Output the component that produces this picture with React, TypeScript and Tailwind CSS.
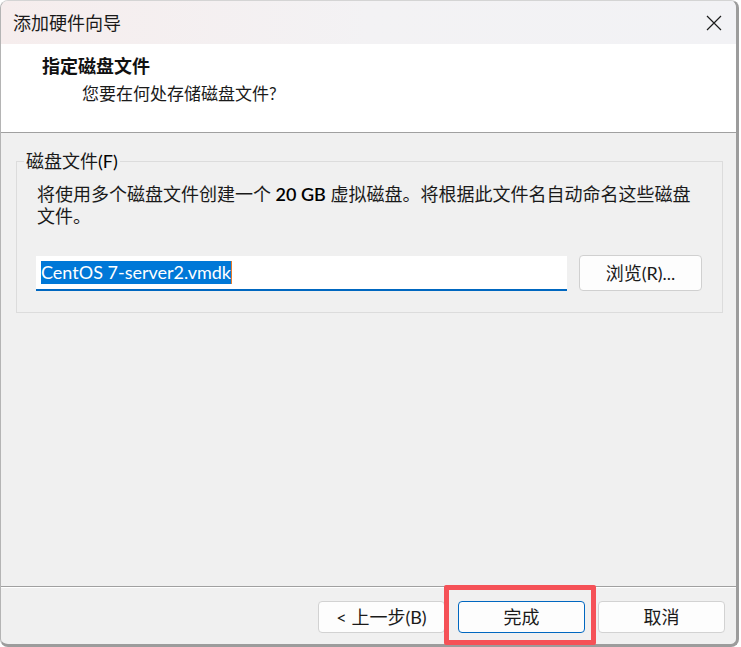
import React from 'react';

const FONT = "font-['Lato','Noto_Sans_CJK_SC',sans-serif]";

function CloseIcon() {
  return (
    <svg width="16" height="16" viewBox="0 0 16 16" fill="none">
      <path d="M1 1L15 15M15 1L1 15" stroke="#1c1c1c" strokeWidth="1.2" />
    </svg>
  );
}

function DialogButton({ label, primary }: { label: string; primary?: boolean }) {
  return (
    <button
      className={`w-[127px] h-[32px] rounded-[4px] bg-[#fdfdfd] text-[18px] text-[#1a1a1a] border ${
        primary ? 'border-[#0067c0]' : 'border-[#d2d2d2]'
      }`}
    >
      {label}
    </button>
  );
}

export default function App() {
  return (
    <div className={`relative w-[741px] h-[647px] bg-white ${FONT}`}>
      {/* Wizard window */}
      <div className="w-[739px] h-[647px] flex flex-col overflow-hidden rounded-[8px] bg-[#f0f0f0] border-t border-l border-t-[#d4d4d4] border-l-[#b4b4b4] border-r-[3px] border-b-[3px] border-r-[#9c9c9c] border-b-[#9c9c9c]">
        {/* Title bar */}
        <div className="h-[43px] shrink-0 flex items-center justify-between pl-[12px] bg-linear-to-r from-[#f6eded] via-[#f3f2f4] to-[#f2f2f5]">
          <span className="text-[18px] leading-[24px] text-[#1a1a1a]">添加硬件向导</span>
          <div className="w-[44px] h-[43px] flex items-center justify-center">
            <CloseIcon />
          </div>
        </div>

        {/* Page header */}
        <div className="h-[89px] shrink-0 bg-white border-b border-[#a0a0a0] pt-[10px]">
          <div className="pl-[41px] text-[18px] leading-[24px] font-bold text-[#111]">指定磁盘文件</div>
          <div className="pl-[81px] mt-[4px] text-[17px] leading-[24px] text-[#1a1a1a]">您要在何处存储磁盘文件?</div>
        </div>

        {/* Body */}
        <div className="flex-1 pt-[16px] pl-[15px]">
          <fieldset className="w-[707px] border border-[#dcdcdc] px-0 pb-[21px]">
            <legend className="ml-[7px] px-[2px] text-[18px] leading-[24px] text-[#1a1a1a]">
              磁盘文件<span className="text-[#000]">(F)</span>
            </legend>
            <div className="pl-[20px] pt-[10px] text-[18px] leading-[22px] text-[#1a1a1a]">
              将使用多个磁盘文件创建一个 <span className="text-[#000] font-semibold">20 GB</span> 虚拟磁盘。将根据此文件名自动命名这些磁盘
              <br />
              文件。
            </div>
            <div className="flex items-center gap-[12px] pl-[19px] mt-[28px]">
              <div className="w-[531px] h-[35px] bg-white border-b-2 border-[#0067c0] flex items-center pl-[5px]">
                <span className="bg-[#0078d7] text-white text-[18px] leading-[23px]">CentOS 7-server2.vmdk</span>
                <span className="w-px h-[23px] bg-[#e27b2c]" />
              </div>
              <button className="w-[123px] h-[36px] rounded-[4px] bg-[#fdfdfd] border border-[#d0d0d0] text-[18px] text-[#1a1a1a]">
                浏览(R)...
              </button>
            </div>
          </fieldset>
        </div>

        {/* Footer buttons */}
        <div className="h-[58px] shrink-0 border-t border-[#a0a0a0] shadow-[inset_0_1px_0_#ffffff] flex justify-end gap-[13px] pt-[14px] pr-[11px]">
          <DialogButton label="< 上一步(B)" />
          <DialogButton label="完成" primary />
          <DialogButton label="取消" />
        </div>
      </div>

      {/* Red highlight around the finish button */}
      <div className="absolute left-[444px] top-[585px] w-[152px] h-[60px] border-[5px] border-[#f55157] rounded-[2px]" />
    </div>
  );
}
